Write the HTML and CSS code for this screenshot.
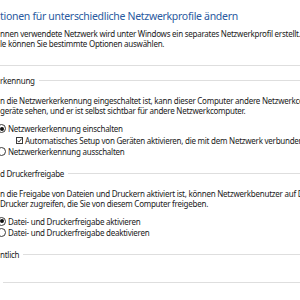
FILE: index.html
```html
<!DOCTYPE html>
<html lang="de">
<head>
    <meta charset="UTF-8">
    <title>Erweiterte Freigabeeinstellungen</title>
    <link rel="stylesheet" href="styles.css">
</head>
<body>
    <div class="seite">
        <h1 class="titel">tionen für unterschiedliche Netzwerkprofile ändern</h1>
        <p class="text">nnen verwendete Netzwerk wird unter Windows ein separates Netzwerkprofil erstellt. Für<br>le können Sie bestimmte Optionen auswählen.</p>

        <div class="trenner"></div>

        <div class="abschnitt erster">
            <div class="kopf"><span>rkennung</span><span class="linie"></span></div>
            <p class="text">n die Netzwerkerkennung eingeschaltet ist, kann dieser Computer andere Netzwerkcomputer und<br>geräte sehen, und er ist selbst sichtbar für andere Netzwerkcomputer.</p>
            <div class="optionen">
                <div class="option"><span class="radio an"></span>Netzwerkerkennung einschalten</div>
                <div class="option unter">
                    <svg class="haken" width="7" height="7" viewBox="0 0 7 7">
                        <rect x="0.5" y="0.5" width="6" height="6" fill="#fff" stroke="#3a3a3a"/>
                        <path d="M1.4 3.6 L2.9 5.1 L5.7 1.6" fill="none" stroke="#222" stroke-width="0.9"/>
                    </svg>
                    Automatisches Setup von Geräten aktivieren, die mit dem Netzwerk verbunden sind
                </div>
                <div class="option"><span class="radio"></span>Netzwerkerkennung ausschalten</div>
            </div>
        </div>

        <div class="abschnitt">
            <div class="kopf"><span>d Druckerfreigabe</span><span class="linie"></span></div>
            <p class="text">n die Freigabe von Dateien und Druckern aktiviert ist, können Netzwerkbenutzer auf Dateien und<br>Drucker zugreifen, die Sie von diesem Computer freigeben.</p>
            <div class="optionen">
                <div class="option"><span class="radio an"></span>Datei- und Druckerfreigabe aktivieren</div>
                <div class="option"><span class="radio"></span>Datei- und Druckerfreigabe deaktivieren</div>
            </div>
        </div>

        <div class="abschnitt">
            <div class="kopf"><span>ntlich</span><span class="linie"></span></div>
        </div>

        <div class="trenner unten"></div>
    </div>
</body>
</html>
```

FILE: styles.css
```css
body {
    margin: 0;
    background: #fff;
    font-family: "Noto Sans", "Open Sans", sans-serif;
    color: #1a1a1a;
    overflow: hidden;
}

.seite {
    width: 300px;
    height: 300px;
    overflow: hidden;
    padding-top: 9px;
    box-sizing: border-box;
}

.titel {
    margin: 0;
    font-size: 10.5px;
    font-weight: normal;
    letter-spacing: -0.3px;
    line-height: 14px;
    color: #2a5aa0;
    white-space: nowrap;
}

.text {
    margin: 6px 0 0;
    font-size: 8px;
    letter-spacing: -0.25px;
    line-height: 10px;
    white-space: nowrap;
}

.trenner {
    height: 1px;
    background: #dedede;
    margin-top: 16px;
}

.abschnitt {
    margin-top: 10px;
}

.abschnitt.erster {
    margin-top: 9px;
}

.abschnitt .text {
    margin-top: 10px;
}

.kopf {
    display: flex;
    align-items: center;
    gap: 4px;
    font-size: 8px;
    letter-spacing: -0.25px;
    line-height: 11px;
    white-space: nowrap;
}

.linie {
    flex: 1;
    height: 1px;
    background: #dedede;
}

.optionen {
    margin-top: 7px;
    margin-left: -3px;
}

.option {
    display: flex;
    align-items: center;
    gap: 2px;
    font-size: 8px;
    letter-spacing: -0.25px;
    line-height: 11.5px;
    white-space: nowrap;
}

.option.unter {
    margin-left: 19px;
}

.radio {
    width: 7px;
    height: 7px;
    border: 1px solid #3a3a3a;
    border-radius: 50%;
    display: flex;
    align-items: center;
    justify-content: center;
    flex: none;
}

.radio.an::after {
    content: "";
    width: 4px;
    height: 4px;
    border-radius: 50%;
    background: #111;
}

.haken {
    flex: none;
}

.trenner.unten {
    margin-top: 22px;
    margin-left: 3px;
}
```
